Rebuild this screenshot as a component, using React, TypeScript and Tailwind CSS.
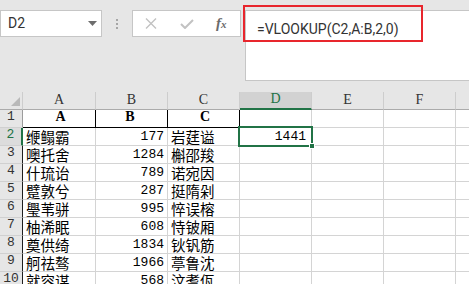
import React from "react";

// Excel-like sheet: name box, formula bar, grid with selected D2

const rows: string[][] = [
  ["A", "B", "C", ""],
  ["缏鳎霸", "177", "岩莛谥", "1441"],
  ["噢托舍", "1284", "槲邵羧", ""],
  ["什琉诒", "789", "诺宛因", ""],
  ["躄敦兮", "287", "挺隋剁", ""],
  ["璺苇骈", "995", "悴误榕", ""],
  ["柚浠眠", "608", "恃铍厢", ""],
  ["奠供绮", "1834", "钬钒筋", ""],
  ["舸祛骜", "1966", "葶鲁沈", ""],
  ["就容谋", "568", "汶耆佤", ""],
];

const cjk = "font-['Noto_Sans_CJK_SC',sans-serif] text-[14.5px]";
const num = "font-['Liberation_Mono',monospace] text-[13px]";

function ColHeader({ label, w, active }: { label: string; w: string; active?: boolean }) {
  return (
    <div
      className={`${w} h-full flex items-end justify-center pb-[1px] font-['Liberation_Serif',serif] text-[14px] leading-[16px] border-r border-[#cdcdcd] ${
        active
          ? "bg-[#d2d2d2] text-[#217346] border-b-2 border-b-[#217346]"
          : "text-[#333] border-b border-b-[#ababab]"
      }`}
    >
      {label}
    </div>
  );
}

function SheetRow({ n, cells }: { n: number; cells: string[] }) {
  const first = n === 1;
  const sel = n === 2;
  const dark = n >= 3;
  const cellLine = first ? "border-r-black border-b-black" : "border-r-[#d4d4d4] border-b-[#d4d4d4]";
  return (
    <div className="flex h-[18px] shrink-0">
      <div
        className={`w-[23px] h-full flex items-end justify-center pb-[1px] ${num} border-b border-b-[#d0d0d0] ${
          sel
            ? "bg-[#dcdcdc] text-[#217346] border-r-2 border-r-[#217346]"
            : dark
            ? "bg-[#e6e6e6] text-[#333] border-r border-r-[#1f1f1f]"
            : "bg-[#e6e6e6] text-[#333] border-r border-r-[#9c9c9c]"
        }`}
      >
        {n}
      </div>
      <div
        className={`w-[73px] h-full flex items-end pl-[3px] border-r border-b ${cellLine} ${
          first ? "justify-center font-['Liberation_Serif',serif] font-bold text-[14px] text-black" : `${cjk} leading-[17px] text-black`
        }`}
      >
        {cells[0]}
      </div>
      <div
        className={`w-[72px] h-full flex items-end pr-[3px] border-r border-b ${cellLine} ${
          first
            ? "justify-center font-['Liberation_Serif',serif] font-bold text-[14px] text-black"
            : `justify-end ${num} leading-[17px] text-black`
        }`}
      >
        {cells[1]}
      </div>
      <div
        className={`w-[72px] h-full flex items-end pl-[3px] border-r border-b ${cellLine} ${
          first ? "justify-center font-['Liberation_Serif',serif] font-bold text-[14px] text-black" : `${cjk} leading-[17px] text-black`
        }`}
      >
        {cells[2]}
      </div>
      <div
        className={`w-[72px] h-full flex items-end justify-end pr-[5px] border-r border-b border-[#d4d4d4] ${num} leading-[17px] text-black`}
      >
        {cells[3]}
      </div>
      <div className="w-[72px] h-full border-r border-b border-[#d4d4d4]" />
      <div className="w-[72px] h-full border-r border-b border-[#d4d4d4]" />
      <div className="flex-1 h-full border-b border-[#d4d4d4]" />
    </div>
  );
}

export default function App() {
  return (
    <div className="relative w-[469px] h-[284px] overflow-hidden bg-white">
      {/* barra de fórmulas */}
      <div className="flex h-[92px] items-start bg-[#e6e6e6] pt-[10px]">
        <div className="w-[102px] h-[27px] bg-white border border-[#c6c6c6] flex items-center justify-between pl-[7px] pr-[4px]">
          <span className="font-['Roboto',sans-serif] text-[14px] text-[#333]">D2</span>
          <svg width="9" height="5" viewBox="0 0 9 5">
            <path d="M0 0h9L4.5 5z" fill="#6d6d6d" />
          </svg>
        </div>
        <div className="w-[30px] h-[27px] flex flex-col items-center justify-center gap-[2px] pr-[1px]">
          <div className="w-[2px] h-[2px] bg-[#a6a6a6]" />
          <div className="w-[2px] h-[2px] bg-[#a6a6a6]" />
          <div className="w-[2px] h-[2px] bg-[#a6a6a6]" />
        </div>
        <div className="w-[109px] h-[27px] bg-white border border-[#c6c6c6] flex items-center">
          <svg className="ml-[12px]" width="12" height="11" viewBox="0 0 12 11">
            <path d="M1 0.5l10 10M11 0.5l-10 10" stroke="#c2c2c2" strokeWidth="1.4" />
          </svg>
          <svg className="ml-[23px]" width="14" height="10" viewBox="0 0 14 10">
            <path d="M1 5l4 4L13 1" stroke="#c2c2c2" strokeWidth="2" fill="none" />
          </svg>
          <span className="ml-[22px] font-['Liberation_Serif',serif] italic font-bold text-[15px] text-[#6b6b6b] leading-none">
            f<span className="text-[11px]">x</span>
          </span>
        </div>
        <div className="ml-[4px] flex-1 h-[71px] bg-white border border-r-0 border-[#c6c6c6] pl-[11px] pt-[5px]">
          <span className="font-['Roboto',sans-serif] text-[14px] leading-[20px] text-[#333]">=VLOOKUP(C2,A:B,2,0)</span>
        </div>
      </div>

      {/* cuadrícula */}
      <div className="flex flex-col">
        <div className="flex h-[18px] bg-[#e6e6e6]">
          <div className="w-[23px] h-full flex items-end justify-end pr-[2px] pb-[3px] border-r border-b border-[#ababab] border-r-[#cdcdcd]">
            <svg width="9" height="9" viewBox="0 0 9 9">
              <path d="M9 0v9H0z" fill="#b9b9b9" />
            </svg>
          </div>
          <ColHeader label="A" w="w-[73px]" />
          <ColHeader label="B" w="w-[72px]" />
          <ColHeader label="C" w="w-[72px]" />
          <ColHeader label="D" w="w-[72px]" active />
          <ColHeader label="E" w="w-[72px]" />
          <ColHeader label="F" w="w-[72px]" />
          <div className="flex-1 h-full border-b border-[#ababab]" />
        </div>
        {rows.map((cells, i) => (
          <SheetRow key={i} n={i + 1} cells={cells} />
        ))}
      </div>

      {/* celda activa */}
      <div className="absolute left-[238px] top-[126px] w-[75px] h-[21px] border-2 border-[#217346]" />
      <div className="absolute left-[309px] top-[143px] w-[6px] h-[6px] bg-[#217346] border border-white" />

      {/* marca roja */}
      <div className="absolute left-[243px] top-[5px] w-[180px] h-[37px] border-2 border-[#e8262d]" />
    </div>
  );
}
